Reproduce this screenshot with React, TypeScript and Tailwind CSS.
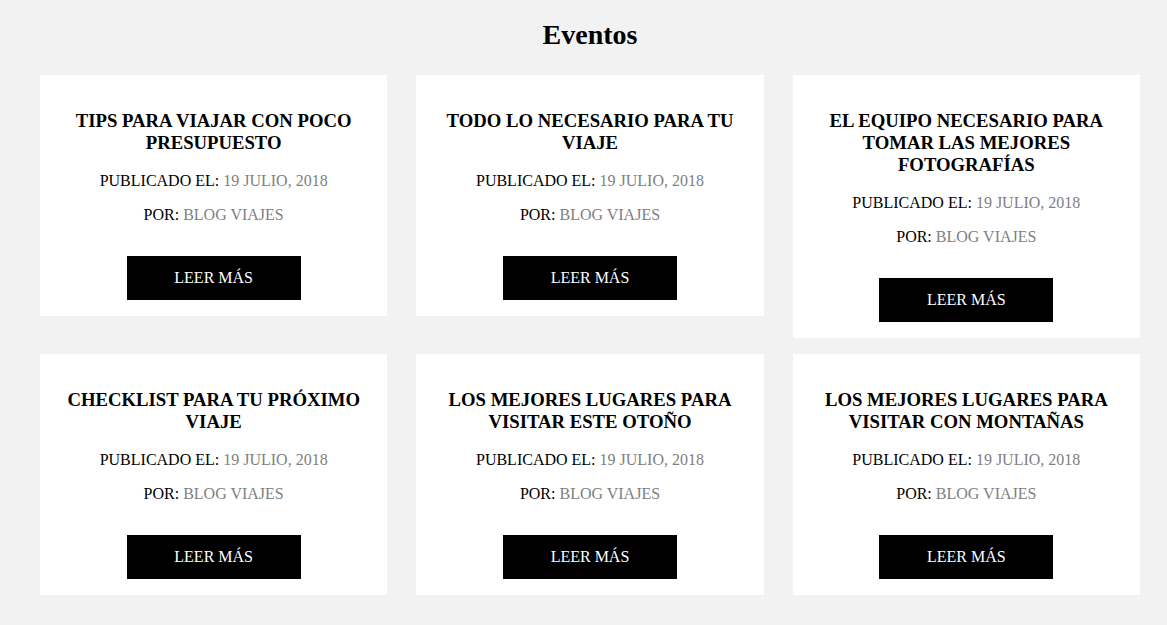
const posts = [
  { title: 'Tips para viajar con poco presupuesto' },
  { title: 'Todo lo necesario para tu viaje' },
  { title: 'El equipo necesario para tomar las mejores fotografías' },
  { title: 'Checklist para tu próximo viaje' },
  { title: 'Los mejores lugares para visitar este otoño' },
  { title: 'Los mejores lugares para visitar con montañas' },
];

function PostCard({ title }: { title: string }) {
  return (
    <div className="bg-white flex flex-col items-center text-center px-[24px] pt-[35px] pb-[16px]">
      <h3 className="uppercase font-bold text-[18.72px] leading-[22px] text-black">{title}</h3>
      <p className="uppercase text-[16px] leading-[24px] mt-[15px]">
        Publicado el: <span className="text-[#808080]">19 julio, 2018</span>
      </p>
      <p className="uppercase text-[16px] leading-[24px] mt-[10px]">
        Por: <span className="text-[#808080]">Blog viajes</span>
      </p>
      <button className="mt-[29px] w-[174px] h-[44px] bg-black text-white uppercase text-[16px]">
        Leer más
      </button>
    </div>
  );
}

export default function App() {
  return (
    <div
      className="min-h-screen bg-[#f2f2f2] text-black pt-[19px] pb-[30px]"
      style={{ fontFamily: '"Liberation Serif", "Times New Roman", serif' }}
    >
      <div className="w-[1100px] ml-[40px]">
        <h1 className="text-center font-bold text-[28px] leading-[32px] mb-[24px]">Eventos</h1>
        <div className="grid grid-cols-3 gap-x-[29px] gap-y-[16px] items-start">
          {posts.map((p) => (
            <PostCard key={p.title} title={p.title} />
          ))}
        </div>
      </div>
    </div>
  );
}
